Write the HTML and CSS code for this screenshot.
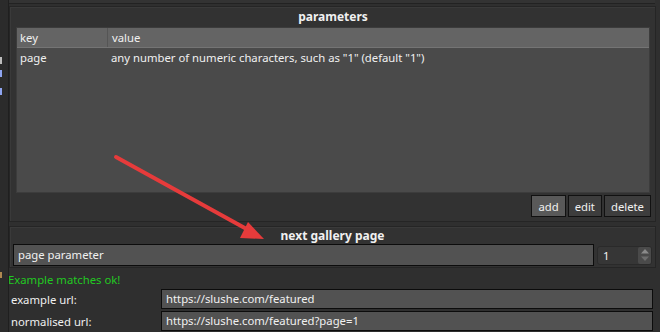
FILE: index.html
```html
<!DOCTYPE html>
<html lang="en">
<head>
    <meta charset="UTF-8">
    <title>next gallery page</title>
    <link rel="stylesheet" href="styles.css">
</head>
<body>
    <div class="window">
        <div class="side-strip">
            <span class="mark mark-s"></span>
            <span class="mark mark-d"></span>
            <span class="mark mark-n"></span>
            <span class="mark mark-o"></span>
        </div>

        <div class="main">
            <div class="top-frame"></div>

            <div class="panel params">
                <div class="panel-title">parameters</div>
                <div class="table">
                    <div class="thead">
                        <div class="col-key">key</div>
                        <div class="col-value">value</div>
                    </div>
                    <div class="trow">
                        <div class="col-key">page</div>
                        <div class="col-value">any number of numeric characters, such as "1" (default "1")</div>
                    </div>
                </div>
                <div class="buttons">
                    <button class="btn active">add</button>
                    <button class="btn">edit</button>
                    <button class="btn">delete</button>
                </div>
            </div>

            <div class="panel gallery">
                <div class="panel-title">next gallery page</div>
                <div class="gallery-row">
                    <div class="field wide">page parameter</div>
                    <div class="spinbox">
                        <span class="spin-val">1</span>
                        <span class="spin-btns">
                            <svg width="10" height="14" viewBox="0 0 10 14">
                                <path d="M5 1 L9 5.5 L1 5.5 Z" fill="#8a8a8a"/>
                                <path d="M1 8.5 L9 8.5 L5 13 Z" fill="#6e6e6e"/>
                            </svg>
                        </span>
                    </div>
                </div>
            </div>

            <div class="status-ok">Example matches ok!</div>

            <div class="url-row">
                <div class="url-label">example url:</div>
                <div class="field url">https://slushe.com/featured</div>
            </div>
            <div class="url-row">
                <div class="url-label">normalised url:</div>
                <div class="field url">https://slushe.com/featured?page=1</div>
            </div>
        </div>
    </div>

    <!-- annotation arrow drawn over the dialog -->
    <svg class="arrow" width="660" height="332" viewBox="0 0 660 332">
        <line x1="116" y1="157" x2="252" y2="232" stroke="#e63b3b" stroke-width="4" stroke-linecap="round"/>
        <path d="M264 239 L240 238 L248 222 Z" fill="#e63b3b"/>
    </svg>
</body>
</html>
```

FILE: styles.css
```css
body {
    margin: 0;
    background: #2f2f2f;
    font-family: 'Noto Sans', 'DejaVu Sans', sans-serif;
    font-size: 11.3px;
    color: #f0f0f0;
    width: 660px;
    height: 332px;
    overflow: hidden;
}
.window {
    display: flex;
    height: 332px;
}
.side-strip {
    width: 8px;
    background: #2b2b2b;
    border-right: 1px solid #1f1f1f;
    position: relative;
    flex-shrink: 0;
}
/* glyph ends of a neighbouring widget peeking in */
.mark {
    position: absolute;
    left: 0;
    width: 2px;
    height: 7px;
}
.mark-s { top: 57px; background: #bdbdbd; }
.mark-d { top: 70px; background: #8ea4f0; }
.mark-n { top: 88px; background: #8ea4f0; }
.mark-o { top: 272px; height: 6px; background: #b08850; }
.main {
    flex: 1;
    display: flex;
    flex-direction: column;
    padding-right: 4px;
}
.top-frame {
    height: 3px;
    border-bottom: 1px solid #222;
    background: #333;
    margin-bottom: 2px;
    margin-right: 1px;
}
.panel {
    background: #323232;
    border: 1px solid #252525;
    box-shadow: inset 1px 1px 0 #3a3a3a;
}
.params {
    height: 214px;
    padding: 0 5px 0 6px;
    display: flex;
    flex-direction: column;
}
.panel-title {
    font-weight: bold;
    font-size: 12px;
    text-align: center;
    height: 20px;
    line-height: 20px;
}
.table {
    height: 164px;
    background: #4a4a4a;
    border: 1px solid #3c3c3c;
}
.thead, .trow {
    display: flex;
}
.thead {
    height: 19px;
    line-height: 19px;
    background: #646464;
    border-bottom: 1px solid #747474;
}
.thead .col-key {
    border-right: 1px solid #555;
}
.trow {
    height: 19px;
    line-height: 19px;
}
.col-key {
    width: 87px;
    padding-left: 3px;
}
.col-value {
    flex: 1;
    padding-left: 4px;
}
.buttons {
    display: flex;
    justify-content: flex-end;
    gap: 2px;
    margin-top: 2px;
    margin-right: -1px;
}
.btn {
    font-family: inherit;
    font-size: 11.3px;
    color: #f0f0f0;
    background: #3d3d3d;
    border: 1px solid #111;
    height: 22px;
    padding: 0 6px;
}
.btn.active {
    background: #595959;
}
.gallery {
    margin-top: 4px;
    height: 40px;
    padding: 0 3px;
}
.gallery .panel-title {
    height: 17px;
    line-height: 18px;
}
.gallery-row {
    display: flex;
    align-items: center;
    gap: 3px;
}
.field {
    background: #525252;
    border: 1px solid #0c0c0c;
    height: 20px;
    line-height: 20px;
    padding-left: 4px;
    box-sizing: border-box;
}
.field.wide {
    width: 581px;
    height: 22px;
}
.spinbox {
    width: 55px;
    height: 19px;
    background: #363636;
    border: 1px solid #2a2a2a;
    border-radius: 3px;
    display: flex;
    align-items: center;
    justify-content: space-between;
    box-sizing: border-box;
}
.spin-val {
    padding-left: 5px;
}
.spin-btns {
    width: 13px;
    height: 17px;
    background: #4a4a4a;
    border-radius: 2px;
    display: flex;
    align-items: center;
    justify-content: center;
}
.status-ok {
    color: #22c822;
    margin-left: -1px;
    height: 20px;
    line-height: 24px;
}
.url-row {
    display: flex;
    align-items: center;
    height: 22px;
}
.url-label {
    width: 150px;
    padding-left: 2px;
}
.field.url {
    width: 492px;
    height: 20px;
    line-height: 18px;
}
.arrow {
    position: absolute;
    left: 0;
    top: 0;
    pointer-events: none;
}
```
